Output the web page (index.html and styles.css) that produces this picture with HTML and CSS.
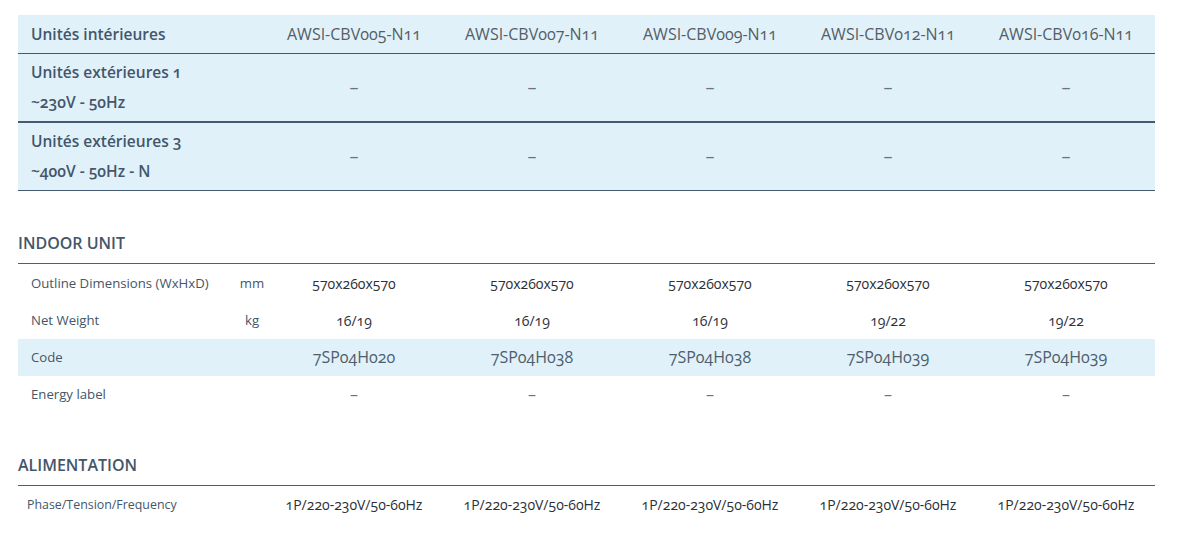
FILE: index.html
```html
<!DOCTYPE html>
<html lang="fr">
<head>
<meta charset="utf-8">
<link rel="stylesheet" href="styles.css">
</head>
<body>
<div class="page">
  <table class="spec top">
    <colgroup><col class="c-first"><col class="c-val"><col class="c-val"><col class="c-val"><col class="c-val"><col class="c-val"></colgroup>
    <tr class="head">
      <th class="label">Unités intérieures</th>
      <td>AWSI-CBV005-N11</td><td>AWSI-CBV007-N11</td><td>AWSI-CBV009-N11</td><td>AWSI-CBV012-N11</td><td>AWSI-CBV016-N11</td>
    </tr>
    <tr class="ext thick">
      <th class="label">Unités extérieures 1<br>~230V - 50Hz</th>
      <td>–</td><td>–</td><td>–</td><td>–</td><td>–</td>
    </tr>
    <tr class="ext">
      <th class="label">Unités extérieures 3<br>~400V - 50Hz - N</th>
      <td>–</td><td>–</td><td>–</td><td>–</td><td>–</td>
    </tr>
  </table>

  <h2 class="section indoor">INDOOR UNIT</h2>
  <table class="spec data">
    <colgroup><col class="c-name"><col class="c-unit"><col class="c-val"><col class="c-val"><col class="c-val"><col class="c-val"><col class="c-val"></colgroup>
    <tr>
      <th class="name">Outline Dimensions (WxHxD)</th><td class="unit">mm</td>
      <td>570x260x570</td><td>570x260x570</td><td>570x260x570</td><td>570x260x570</td><td>570x260x570</td>
    </tr>
    <tr>
      <th class="name">Net Weight</th><td class="unit">kg</td>
      <td>16/19</td><td>16/19</td><td>16/19</td><td>19/22</td><td>19/22</td>
    </tr>
    <tr class="code">
      <th class="name">Code</th><td class="unit"></td>
      <td>7SP04H020</td><td>7SP04H038</td><td>7SP04H038</td><td>7SP04H039</td><td>7SP04H039</td>
    </tr>
    <tr>
      <th class="name">Energy label</th><td class="unit"></td>
      <td class="dash">–</td><td class="dash">–</td><td class="dash">–</td><td class="dash">–</td><td class="dash">–</td>
    </tr>
  </table>

  <h2 class="section alim">ALIMENTATION</h2>
  <table class="spec data">
    <colgroup><col class="c-name"><col class="c-unit"><col class="c-val"><col class="c-val"><col class="c-val"><col class="c-val"><col class="c-val"></colgroup>
    <tr class="phase-row">
      <th class="name phase">Phase/Tension/Frequency</th><td class="unit"></td>
      <td>1P/220-230V/50-60Hz</td><td>1P/220-230V/50-60Hz</td><td>1P/220-230V/50-60Hz</td><td>1P/220-230V/50-60Hz</td><td>1P/220-230V/50-60Hz</td>
    </tr>
  </table>
</div>
</body>
</html>
```

FILE: styles.css
```css
html, body {
  margin: 0;
  padding: 0;
  background: #ffffff;
}
body {
  font-family: "Open Sans", "Liberation Sans", sans-serif;
  font-variant-numeric: oldstyle-nums;
  font-feature-settings: "onum" 1;
  color: #44566a;
}
.page {
  padding: 15px 22px 0 18px;
}
.spec {
  width: 1137px;
  border-collapse: collapse;
  table-layout: fixed;
}
.spec th, .spec td {
  padding: 0;
  text-align: center;
  font-weight: 400;
}
.c-first { width: 247px; }
.c-val { width: 178px; }
.c-name { width: 221px; }
.c-unit { width: 26px; }

.top tr {
  background: #e1f1fa;
}
.top .label {
  text-align: left;
  padding-left: 13px;
  font-weight: 600;
  font-size: 15.5px;
  color: #44566a;
}
.top .head {
  height: 38px;
  border-bottom: 1px solid #455a6e;
}
.top .head td {
  font-size: 16px;
  color: #555d66;
}
.top .ext {
  height: 68px;
  border-bottom: 1px solid #455a6e;
}
.top .ext.thick {
  height: 69px;
  border-bottom: 2px solid #455a6e;
}
.top .ext .label {
  line-height: 30px;
}
.top .ext td {
  font-size: 18px;
  color: #6a7480;
}

.section {
  margin: 0;
  font-size: 16px;
  font-weight: 600;
  color: #44566a;
  padding-bottom: 10px;
  border-bottom: 1px solid #555d66;
  width: 1137px;
  line-height: 20px;
}
.section.indoor { margin-top: 42px; }
.section.alim { margin-top: 42px; }
.section + .data { margin-top: 1px; }

.data tr {
  height: 37px;
}
.data .phase-row {
  height: 35px;
}
.data .name {
  text-align: left;
  padding-left: 13px;
  font-size: 13.2px;
  color: #44566a;
}
.data .name.phase {
  padding-left: 9px;
  font-size: 12.4px;
}
.data .unit {
  font-size: 13.2px;
  color: #44566a;
}
.data td {
  font-size: 14px;
  color: #2c2f38;
}
.data .code {
  background: #e1f1fa;
}
.data .code td {
  font-size: 16px;
  color: #4e5e6c;
}
.data td.dash {
  font-size: 16px;
  color: #6a7480;
}
```
